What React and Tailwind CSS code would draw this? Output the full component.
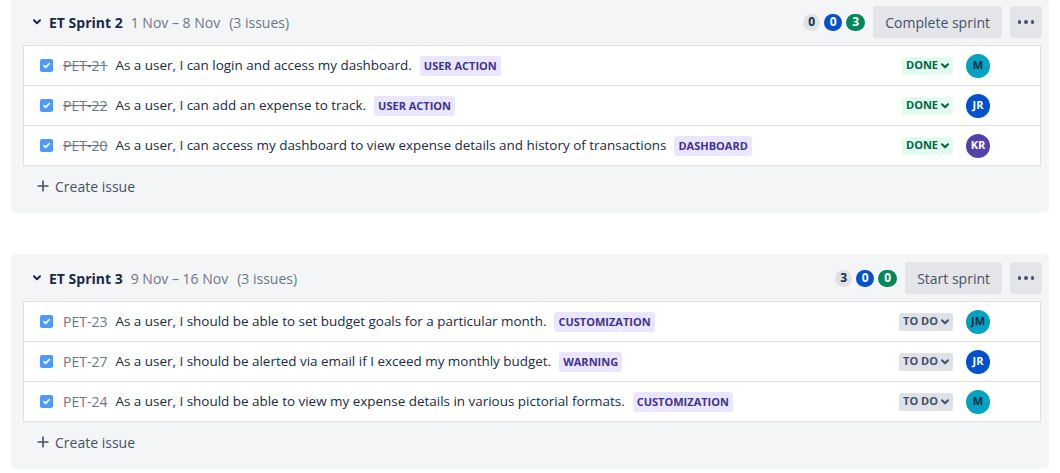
import React from "react";

const FONT = { fontFamily: '"Open Sans", "Noto Sans", sans-serif' };

function Chevron({ className = "", color = "#42526e" }) {
  return (
    <svg width="8" height="6" viewBox="0 0 8 6" className={className}>
      <path d="M1 1.2 L4 4.2 L7 1.2" fill="none" stroke={color} strokeWidth="2" strokeLinecap="round" strokeLinejoin="round" />
    </svg>
  );
}

function Checkbox() {
  return (
    <div className="w-[13px] h-[13px] rounded-[2px] bg-[#4c9aff] flex items-center justify-center shrink-0">
      <svg width="9" height="9" viewBox="0 0 9 9">
        <path d="M1.8 4.6 L3.7 6.4 L7.2 2.6" fill="none" stroke="white" strokeWidth="1.6" strokeLinecap="round" strokeLinejoin="round" />
      </svg>
    </div>
  );
}

const avatarStyles = {
  M: "bg-[#00a3bf] text-[#172b4d]",
  JM: "bg-[#00a3bf] text-[#172b4d]",
  JR: "bg-[#0052cc] text-white",
  KR: "bg-[#5243aa] text-white",
};

function Row({ k, done, summary, label, status, avatar, last }) {
  return (
    <div className={`flex items-center pl-[16px] pr-[50px] ${last ? "h-[39px]" : "h-[40px] border-b border-[#dfe1e6]"}`}>
      <Checkbox />
      <span className={`ml-[10px] text-[14px] text-[#6b778c] ${done ? "line-through" : ""}`}>{k}</span>
      <span className="ml-[8px] text-[13.45px] text-[#172b4d]">{summary}</span>
      <span className="ml-[8px] px-[4px] h-[20px] leading-[20px] rounded-[3px] bg-[#eae6ff] text-[#403294] text-[11px] font-bold uppercase">{label}</span>
      <div className="flex-1" />
      {status === "DONE" ? (
        <span className="h-[18px] px-[4px] rounded-[3px] bg-[#e3fcef] text-[#006644] text-[11px] font-bold flex items-center gap-[3px]">
          DONE <Chevron color="#006644" />
        </span>
      ) : (
        <span className="h-[18px] px-[4px] rounded-[3px] bg-[#dfe1e6] text-[#42526e] text-[11px] font-bold flex items-center gap-[3px]">
          TO DO <Chevron color="#42526e" />
        </span>
      )}
      <div className={`ml-[13px] w-[24px] h-[24px] rounded-full flex items-center justify-center text-[11px] font-bold ${avatarStyles[avatar]}`}>
        {avatar}
      </div>
    </div>
  );
}

function Sprint({ name, dates, counts, action, issues }) {
  return (
    <div className="bg-[#f4f5f7] rounded-[5px] pl-[12px] pr-[8px] pt-[8px] pb-[11px]">
      <div className="h-[32px] flex items-center">
        <Chevron className="ml-[10px]" color="#172b4d" />
        <span className="ml-[8px] text-[14px] font-bold text-[#172b4d]">{name}</span>
        <span className="ml-[8px] text-[14px] text-[#6b778c]">{dates}</span>
        <span className="ml-[9px] text-[14px] text-[#6b778c]">(3 issues)</span>
        <div className="flex-1" />
        <div className="flex items-center gap-[4px]">
          <span className="min-w-[17px] h-[17px] px-[5px] rounded-full bg-[#dfe1e6] text-[#172b4d] text-[12px] font-bold flex items-center justify-center">{counts[0]}</span>
          <span className="min-w-[18px] h-[17px] px-[5px] rounded-full bg-[#0052cc] text-white text-[12px] font-bold flex items-center justify-center">{counts[1]}</span>
          <span className="min-w-[19px] h-[17px] px-[5px] rounded-full bg-[#00875a] text-white text-[12px] font-bold flex items-center justify-center">{counts[2]}</span>
        </div>
        <button className="ml-[8px] h-[32px] px-[12px] rounded-[3px] bg-[#e4e5e9] text-[#42526e] text-[14px] font-medium">{action}</button>
        <button className="ml-[8px] mr-[-1px] w-[32px] h-[32px] rounded-[3px] bg-[#e4e5e9] flex items-center justify-center gap-[3px]">
          <span className="w-[3.5px] h-[3.5px] rounded-full bg-[#42526e]" />
          <span className="w-[3.5px] h-[3.5px] rounded-full bg-[#42526e]" />
          <span className="w-[3.5px] h-[3.5px] rounded-full bg-[#42526e]" />
        </button>
      </div>
      <div className="mt-[7px] bg-white border border-[#dfe1e6]">
        {issues.map((it, i) => (
          <Row key={it.k} {...it} last={i === issues.length - 1} />
        ))}
      </div>
      <div className="mt-[4px] h-[32px] flex items-center pl-[14px]">
        <svg width="12" height="12" viewBox="0 0 12 12">
          <path d="M6 0.5 V11.5 M0.5 6 H11.5" stroke="#42526e" strokeWidth="1.6" />
        </svg>
        <span className="ml-[6px] text-[14px] font-medium text-[#42526e]">Create issue</span>
      </div>
    </div>
  );
}

export default function App() {
  return (
    <div className="w-[1060px] h-[473px] bg-white overflow-hidden" style={FONT}>
      <div className="mt-[-2px] pl-[11px] pr-[11px] flex flex-col gap-[41px]">
        <Sprint
          name="ET Sprint 2"
          dates="1 Nov – 8 Nov"
          counts={["0", "0", "3"]}
          action="Complete sprint"
          issues={[
            { k: "PET-21", done: true, summary: "As a user, I can login and access my dashboard.", label: "User Action", status: "DONE", avatar: "M" },
            { k: "PET-22", done: true, summary: "As a user, I can add an expense to track.", label: "User Action", status: "DONE", avatar: "JR" },
            { k: "PET-20", done: true, summary: "As a user, I can access my dashboard to view expense details and history of transactions", label: "Dashboard", status: "DONE", avatar: "KR" },
          ]}
        />
        <Sprint
          name="ET Sprint 3"
          dates="9 Nov – 16 Nov"
          counts={["3", "0", "0"]}
          action="Start sprint"
          issues={[
            { k: "PET-23", summary: "As a user, I should be able to set budget goals for a particular month.", label: "Customization", status: "TODO", avatar: "JM" },
            { k: "PET-27", summary: "As a user, I should be alerted via email if I exceed my monthly budget.", label: "Warning", status: "TODO", avatar: "JR" },
            { k: "PET-24", summary: "As a user, I should be able to view my expense details in various pictorial formats.", label: "Customization", status: "TODO", avatar: "M" },
          ]}
        />
      </div>
    </div>
  );
}
